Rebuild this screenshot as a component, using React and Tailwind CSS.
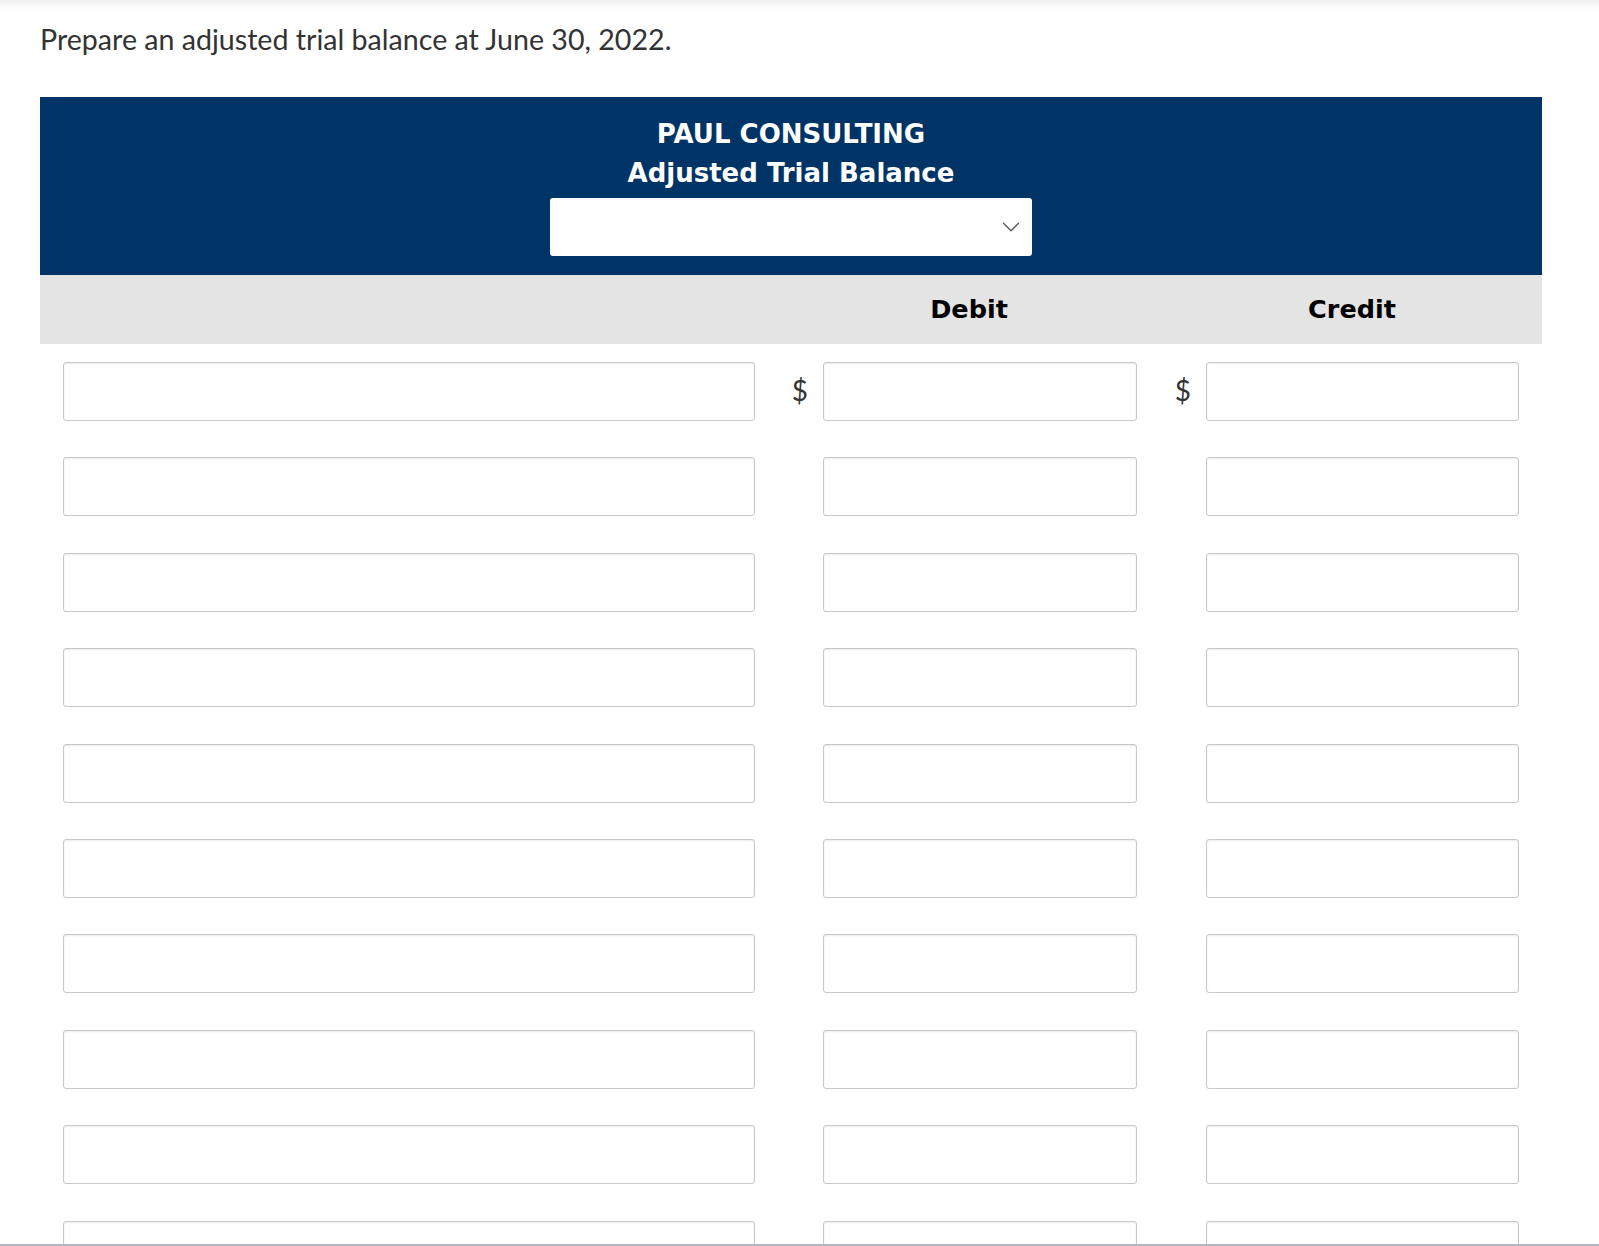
import { ChevronDown } from "lucide-react";

const ROWS = 10;

function Field({ className = "" }) {
  return (
    <input
      type="text"
      className={`h-[59px] rounded-[3px] border border-[#c8c8c8] bg-white shadow-[inset_0_1px_2px_rgba(0,0,0,0.08)] outline-none ${className}`}
    />
  );
}

export default function App() {
  return (
    <div className="relative h-[1246px] overflow-hidden border-b-2 border-[#b4b7c3] bg-white font-['Lato',sans-serif]">
      <div className="absolute inset-x-0 top-0 h-[10px] bg-gradient-to-b from-[#f0f0f0] to-white" />

      <p className="relative pl-[40px] pt-[19px] text-[28.6px] leading-[40px] text-[#333]">
        Prepare an adjusted trial balance at June 30, 2022.
      </p>

      <div className="ml-[40px] mt-[38px] w-[1502px] font-['DejaVu_Sans',sans-serif]">
        <div className="flex flex-col items-center bg-[#003366] pb-[19px] pt-[18px] text-white">
          <h1 className="text-[26px] font-bold leading-[38px]">PAUL CONSULTING</h1>
          <h2 className="text-[26px] font-bold leading-[40px]">Adjusted Trial Balance</h2>
          <div className="mt-[5px] flex h-[58px] w-[482px] items-center justify-end rounded-[3px] bg-white pr-[6px]">
            <ChevronDown className="h-[30px] w-[30px] text-[#555]" strokeWidth={1} />
          </div>
        </div>

        <div className="flex h-[69px] items-center bg-[#e4e4e4] text-[25.5px] font-bold text-black">
          <div className="w-[772px]" />
          <div className="w-[314px] text-center">Debit</div>
          <div className="w-[69px]" />
          <div className="w-[314px] text-center">Credit</div>
        </div>

        <div className="flex flex-col gap-y-[36.4px] px-[23px] pt-[18px] font-['Lato',sans-serif]">
          {Array.from({ length: ROWS }).map((_, i) => (
            <div key={i} className="flex items-center">
              <Field className="w-[692px]" />
              <span className="w-[68px] pb-[3px] pr-[15px] text-right text-[28px] text-[#333]">{i === 0 ? "$" : ""}</span>
              <Field className="w-[314px]" />
              <span className="w-[69px] pb-[3px] pr-[15px] text-right text-[28px] text-[#333]">{i === 0 ? "$" : ""}</span>
              <Field className="w-[313px]" />
            </div>
          ))}
        </div>
      </div>
    </div>
  );
}
